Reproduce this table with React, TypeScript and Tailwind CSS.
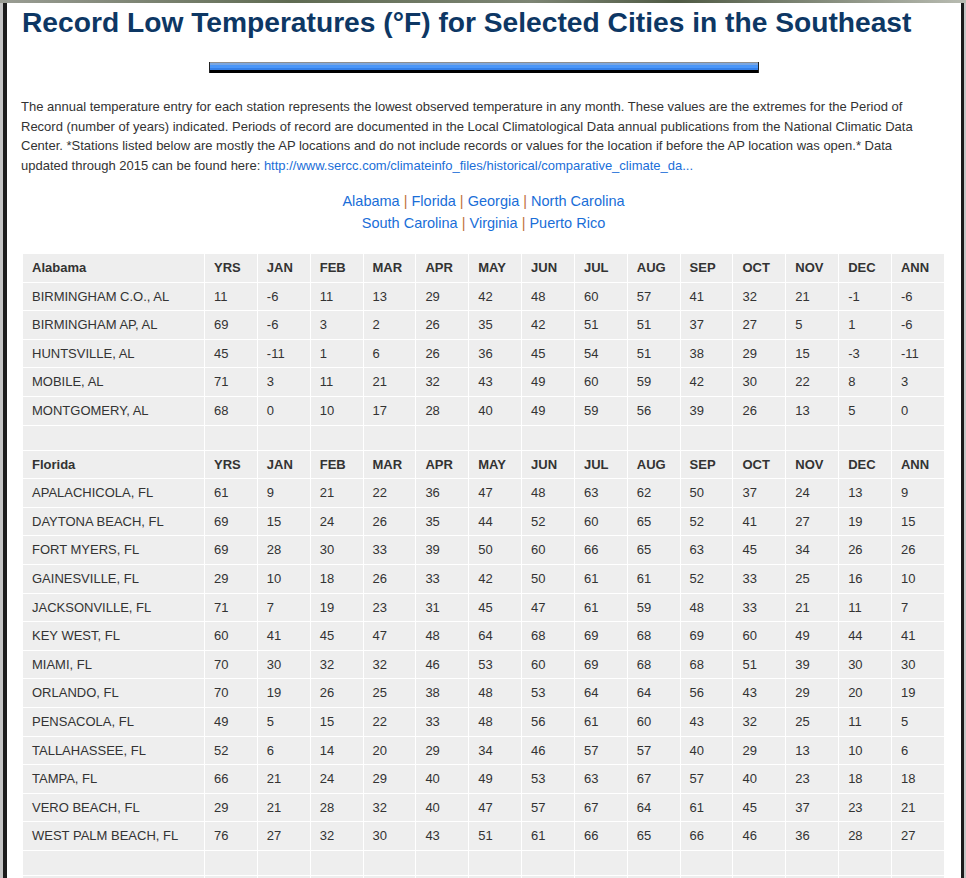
import React from 'react';

const months = ['YRS', 'JAN', 'FEB', 'MAR', 'APR', 'MAY', 'JUN', 'JUL', 'AUG', 'SEP', 'OCT', 'NOV', 'DEC', 'ANN'];

type Row = [string, ...number[]];

const sections: { state: string; rows: Row[] }[] = [
  {
    state: 'Alabama',
    rows: [
      ['BIRMINGHAM C.O., AL', 11, -6, 11, 13, 29, 42, 48, 60, 57, 41, 32, 21, -1, -6],
      ['BIRMINGHAM AP, AL', 69, -6, 3, 2, 26, 35, 42, 51, 51, 37, 27, 5, 1, -6],
      ['HUNTSVILLE, AL', 45, -11, 1, 6, 26, 36, 45, 54, 51, 38, 29, 15, -3, -11],
      ['MOBILE, AL', 71, 3, 11, 21, 32, 43, 49, 60, 59, 42, 30, 22, 8, 3],
      ['MONTGOMERY, AL', 68, 0, 10, 17, 28, 40, 49, 59, 56, 39, 26, 13, 5, 0],
    ],
  },
  {
    state: 'Florida',
    rows: [
      ['APALACHICOLA, FL', 61, 9, 21, 22, 36, 47, 48, 63, 62, 50, 37, 24, 13, 9],
      ['DAYTONA BEACH, FL', 69, 15, 24, 26, 35, 44, 52, 60, 65, 52, 41, 27, 19, 15],
      ['FORT MYERS, FL', 69, 28, 30, 33, 39, 50, 60, 66, 65, 63, 45, 34, 26, 26],
      ['GAINESVILLE, FL', 29, 10, 18, 26, 33, 42, 50, 61, 61, 52, 33, 25, 16, 10],
      ['JACKSONVILLE, FL', 71, 7, 19, 23, 31, 45, 47, 61, 59, 48, 33, 21, 11, 7],
      ['KEY WEST, FL', 60, 41, 45, 47, 48, 64, 68, 69, 68, 69, 60, 49, 44, 41],
      ['MIAMI, FL', 70, 30, 32, 32, 46, 53, 60, 69, 68, 68, 51, 39, 30, 30],
      ['ORLANDO, FL', 70, 19, 26, 25, 38, 48, 53, 64, 64, 56, 43, 29, 20, 19],
      ['PENSACOLA, FL', 49, 5, 15, 22, 33, 48, 56, 61, 60, 43, 32, 25, 11, 5],
      ['TALLAHASSEE, FL', 52, 6, 14, 20, 29, 34, 46, 57, 57, 40, 29, 13, 10, 6],
      ['TAMPA, FL', 66, 21, 24, 29, 40, 49, 53, 63, 67, 57, 40, 23, 18, 18],
      ['VERO BEACH, FL', 29, 21, 28, 32, 40, 47, 57, 67, 64, 61, 45, 37, 23, 21],
      ['WEST PALM BEACH, FL', 76, 27, 32, 30, 43, 51, 61, 66, 65, 66, 46, 36, 28, 27],
    ],
  },
];

const stateLinks = [
  ['Alabama', 'Florida', 'Georgia', 'North Carolina'],
  ['South Carolina', 'Virginia', 'Puerto Rico'],
];

const cell = 'border border-white px-[9px] py-[4px] text-left align-middle';

export default function App() {
  return (
    <div className="min-h-screen bg-[#c4c4c4] font-['Liberation_Sans',Arial,sans-serif] text-[#333]">
      {/* photo strip at the very top */}
      <div className="h-[3px] bg-[linear-gradient(to_right,#9a9d94,#5f6b52_30%,#7d8574_55%,#4f5a44_70%,#b9bcb2)]" />
      <div className="ml-[3px] mr-[2px] border-l-4 border-r-[3px] border-[#1c1c1c] bg-white pl-[15px] pr-[16px] pt-[4px] pb-10">
        <h1 className="text-[28.2px] font-bold leading-[1.1] text-[#0d3764]">
          Record Low Temperatures (°F) for Selected Cities in the Southeast
        </h1>

        <div className="mt-[24px] flex justify-center">
          <div className="h-[11px] w-[550px] border-x border-[#222] bg-[linear-gradient(to_bottom,#8e8e8e_0px,#8e8e8e_1.3px,#7aa6e0_1.3px,#7aa6e0_2.7px,#1b3f7a_2.7px,#1b3f7a_3.3px,#4a96f8_3.3px,#4a96f8_5.7px,#0e2a5c_5.7px,#0e2a5c_6.3px,#3580e8_6.3px,#3580e8_8px,#000_8px,#000_11px)]" />
        </div>

        <p className="mt-[24px] mr-[15px] ml-[-1px] text-[13px] leading-[19.5px]">
          The annual temperature entry for each station represents the lowest observed temperature in any month. These
          values are the extremes for the Period of Record (number of years) indicated. Periods of record are documented
          in the Local Climatological Data annual publications from the National Climatic Data Center. *Stations listed
          below are mostly the AP locations and do not include records or values for the location if before the AP
          location was open.* Data updated through 2015 can be found here:{' '}
          <a className="text-[#1a6ed8]">http://www.sercc.com/climateinfo_files/historical/comparative_climate_da...</a>
        </p>

        <div className="mt-[15px] text-center text-[14.5px] leading-[22px]">
          {stateLinks.map((line, i) => (
            <div key={i}>
              {line.map((name, j) => (
                <span key={name}>
                  {j > 0 && <span className="text-[#c0713a]"> | </span>}
                  <a className="text-[#1a6ed8]">{name}</a>
                </span>
              ))}
            </div>
          ))}
        </div>

        <table className="mt-[19px] w-full table-fixed border-collapse text-[13px] leading-[19.6px]">
          <colgroup>
            <col className="w-[182px]" />
            {months.map((m) => (
              <col key={m} />
            ))}
          </colgroup>
          <tbody>
            {sections.map((s) => (
              <React.Fragment key={s.state}>
                <tr className="bg-[#eeeeee] font-bold">
                  <td className={cell}>{s.state}</td>
                  {months.map((m) => (
                    <td key={m} className={cell}>
                      {m}
                    </td>
                  ))}
                </tr>
                {s.rows.map((r) => (
                  <tr key={r[0]} className="bg-[#eeeeee]">
                    {r.map((v, k) => (
                      <td key={k} className={cell}>
                        {v}
                      </td>
                    ))}
                  </tr>
                ))}
                <tr className="bg-[#eeeeee]">
                  {[s.state, ...months].map((m) => (
                    <td key={m} className="h-[25px] border border-white" />
                  ))}
                </tr>
              </React.Fragment>
            ))}
            <tr className="bg-[#eeeeee] font-bold">
              <td className={cell}>Georgia</td>
              {months.map((m) => (
                <td key={m} className={cell}>
                  {m}
                </td>
              ))}
            </tr>
          </tbody>
        </table>
      </div>
    </div>
  );
}
